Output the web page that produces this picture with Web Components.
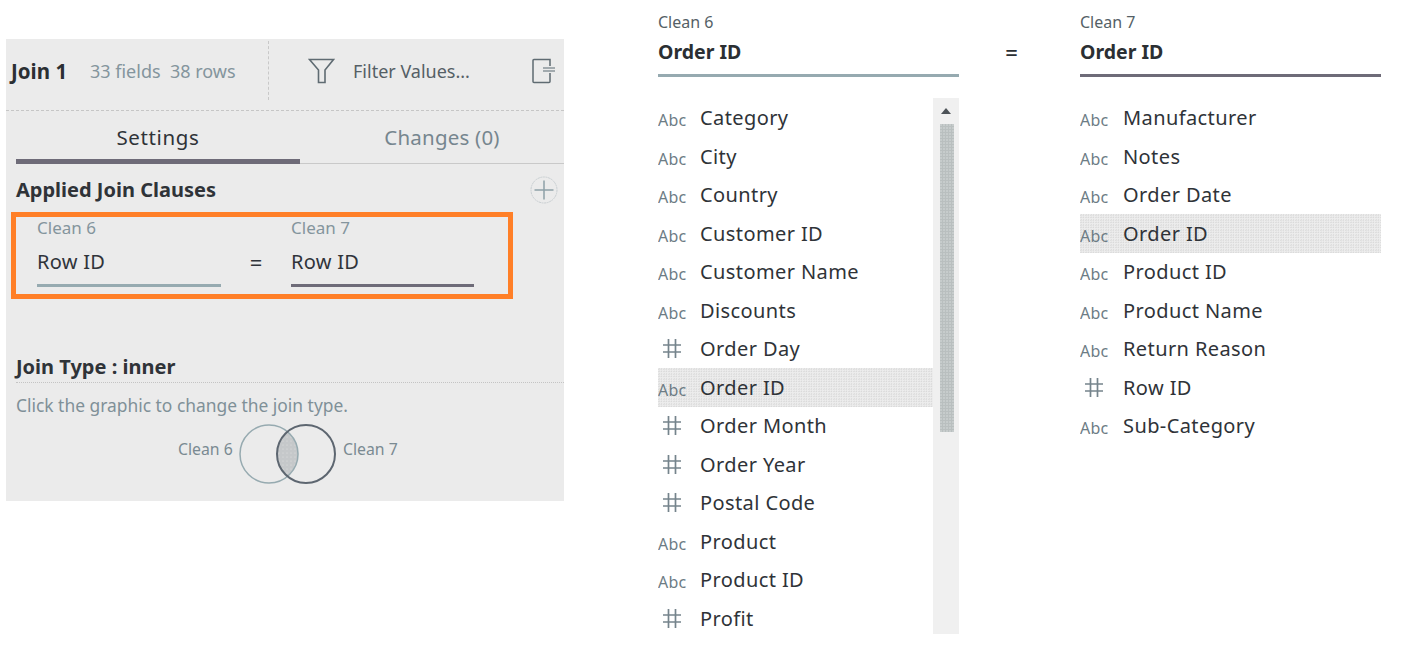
<!DOCTYPE html>
<html><head><meta charset="utf-8"><title>Join</title>
<style>
html,body{margin:0;padding:0;background:#fff;}
body{width:1402px;height:649px;overflow:hidden;font-family:"Noto Sans","Liberation Sans",sans-serif;color:#2b2f33;}
</style></head><body>
<x-page>
  <x-join-panel slot="left">
    <x-clause slot="clause"></x-clause>
    <x-venn slot="venn"></x-venn>
  </x-join-panel>
  <x-field-col slot="center" name="Clean 6" field="Order ID" accent="#96aab0" scroll selected="Order ID"
   items="a:Category,a:City,a:Country,a:Customer ID,a:Customer Name,a:Discounts,n:Order Day,a:Order ID,n:Order Month,n:Order Year,n:Postal Code,a:Product,a:Product ID,n:Profit"></x-field-col>
  <x-field-col slot="right" name="Clean 7" field="Order ID" accent="#6e6b78" selected="Order ID" gap="43"
   items="a:Manufacturer,a:Notes,a:Order Date,a:Order ID,a:Product ID,a:Product Name,a:Return Reason,n:Row ID,a:Sub-Category"></x-field-col>
</x-page>
<script>
const def=(n,html,extra)=>{customElements.define(n,class extends HTMLElement{
  constructor(){super();this.attachShadow({mode:'open'}).innerHTML=html;}
  connectedCallback(){extra&&extra.call(this)}
})};
const dots='background-color:#ededed;background-image:radial-gradient(circle at 1px 1px,#d8d8d8 .7px,transparent .8px);background-size:2.5px 2.5px;';

def('x-page',`<style>
:host{display:flex;align-items:flex-start;width:1402px;height:649px;box-sizing:border-box;padding-left:6px}
.l{margin-top:39px;margin-right:94px;display:block}
.eq{margin:39px 62px 0 46px;font-size:22px;line-height:26px;width:13px;text-align:center;color:#2b2f33;font-weight:500}
.c{margin-top:12px;display:block}
</style><div class="l"><slot name="left"></slot></div><div class="c"><slot name="center"></slot></div><div class="eq">=</div><div class="c"><slot name="right"></slot></div>`);

def('x-join-panel',`<style>
:host{display:block;width:558px;height:462px;background:#ebebeb;font-size:17px;color:#7f9098}
.top{display:flex;align-items:center;height:63px;padding-bottom:8px;border-bottom:1px dashed #c6c6c6}
.title{margin-left:5px;font-weight:700;font-size:20.5px;color:#2b2f33;width:79px;white-space:nowrap}
.meta{width:178px;white-space:pre;font-size:18px;color:#84959d}
.div{width:0;height:59px;border-left:1px dashed #c8c8c8;align-self:flex-start;margin-top:2px}
.f{margin-left:39px;display:block}
.fv{margin-left:18px;width:179px;color:#555f66;font-size:18px;white-space:nowrap}
.tabs{display:flex;height:53px;margin-left:10px;border-bottom:1px solid #c9c9c9;font-size:20.5px;box-sizing:border-box}
.tab{height:52px;line-height:52px;text-align:center;box-sizing:border-box}
.t1{width:284px;border-bottom:5px solid #6e6b78;color:#2f3338;height:53px;letter-spacing:.65px}
.t2{width:244px;margin-left:20px;color:#76868f;letter-spacing:.2px}
.h{display:flex;align-items:center;justify-content:space-between;margin:13px 6px 0 10px;height:26px;font-weight:700;font-size:20px;color:#2f3338}
.h span{margin-top:-2px}
.sec{margin:55px 0 0 10px;font-weight:700;font-size:20px;color:#2f3338;line-height:25px;height:25px;padding-bottom:3px;border-bottom:1px dotted #c4c4c4}
.hint{margin:11px 0 8px 10px;font-size:17.4px;line-height:22px;color:#7f9098;white-space:nowrap}
</style>
<div class="top"><span class="title">Join 1</span><span class="meta">33 fields  38 rows</span><span class="div"></span>
<svg class="f" width="27" height="26" viewBox="0 0 27 26" fill="none" stroke="#5f6b72" stroke-width="1.6"><path d="M1.5 1.5H25.5L17 12V24.5H10.5V12Z"/></svg>
<span class="fv">Filter Values...</span>
<svg width="24" height="26" viewBox="0 0 24 26" fill="none" stroke="#5f6b72" stroke-width="1.5"><path d="M18 8V1.5H2A1 1 0 0 0 1 2.5V23.5A1 1 0 0 0 2 24.5H17A1 1 0 0 0 18 23.5V15"/><path d="M11 10H23M11 13H23" stroke="#8a959b" stroke-width="1.3"/></svg>
</div>
<div class="tabs"><div class="tab t1">Settings</div><div class="tab t2">Changes (0)</div></div>
<div class="h"><span>Applied Join Clauses</span><svg width="28" height="28" viewBox="0 0 28 28" fill="none"><circle cx="14" cy="14" r="13" stroke="#c9cfd2" stroke-dasharray="2 .6"/><path d="M14 4.5V23.5M4.5 14H23.5" stroke="#8fa1a8" stroke-width="1.5"/></svg></div>
<slot name="clause"></slot>
<div class="sec">Join Type : inner</div>
<div class="hint">Click the graphic to change the join type.</div>
<slot name="venn"></slot>
`);

def('x-clause',`<style>
:host{display:flex;box-sizing:border-box;width:502px;height:87px;margin:9px 0 0 5px;border:5px solid #ff7f27;padding:0 0 0 21px;font-size:20px;color:#30343a}
.col{width:184px;display:block}
.n{font-size:17px;line-height:22px;color:#84959d}
.v{line-height:26px;margin-top:10px;letter-spacing:.3px;height:35px}
.u{height:3px}
.eq{width:70px;text-align:center;font-size:22px;line-height:26px;margin-top:32px;height:26px}
</style>
<div class="col"><div class="n">Clean 6</div><div class="v">Row ID</div><div class="u" style="background:#96aab0"></div></div>
<div class="eq">=</div>
<div class="col" style="width:183px"><div class="n">Clean 7</div><div class="v">Row ID</div><div class="u" style="background:#6e6b78"></div></div>`);

def('x-venn',`<style>
:host{display:flex;align-items:center;gap:6px;margin:0 0 0 172px;height:60px;font-size:15.8px;color:#7a8a92}
span{display:block;width:54px;white-space:nowrap;margin-top:-10px}
svg{display:block;flex:none}
</style><span>Clean 6</span>
<svg width="99" height="60" viewBox="0 0 99 60" fill="none">
<defs><pattern id="p" width="4" height="4" patternUnits="userSpaceOnUse"><rect width="4" height="4" fill="#c5c8ca"/><circle cx="1" cy="1" r=".5" fill="#e6e7e8"/></pattern>
<clipPath id="c"><circle cx="31" cy="30" r="29"/></clipPath></defs>
<circle cx="68" cy="30" r="29" fill="url(#p)" clip-path="url(#c)"/>
<circle cx="31" cy="30" r="29" stroke="#96aab0" stroke-width="1.5"/>
<circle cx="68" cy="30" r="29" stroke="#5d6670" stroke-width="2"/></svg>
<span>Clean 7</span>`);

def('x-field-col',`<style>
:host{display:block;width:301px}
.n{font-size:16px;line-height:20px;color:#555f66}
.f{font-weight:700;font-size:19.5px;line-height:26px;margin-top:7px;color:#2b2f33;padding-bottom:9px;border-bottom:3px solid var(--a)}
.body{display:flex;margin-top:21px;height:536px;overflow:hidden}
.list{flex:1 1 auto;min-width:0;padding-top:.5px}
.row{display:flex;align-items:center;height:38.5px;font-size:20px;letter-spacing:.4px;color:#2f3338;white-space:nowrap}
.row.sel{${dots}}
.ic{width:var(--g,42px);flex:none;display:flex;color:#6d7c85;font-size:16px;padding-top:5px;box-sizing:border-box;letter-spacing:.2px}
.ic svg{margin:-5px 0 0 5px;display:block}
.bar{flex:none;width:26px;background:#f0f0f0;display:none;flex-direction:column;align-items:center}
.bar .up{height:26px;display:flex;align-items:center;justify-content:center}
.bar .th{width:14px;margin-left:1px;height:308px;background-color:#b9bfbf;background-image:radial-gradient(circle at 1px 1px,#d6d9d9 .6px,transparent .8px);background-size:3px 3px}
:host([scroll]) .bar{display:flex}
</style>
<div class="n"></div><div class="f"></div>
<div class="body"><div class="list"></div><div class="bar"><div class="up"><svg width="10" height="6" viewBox="0 0 10 6"><path d="M5 0L10 6H0Z" fill="#4d5358"/></svg></div><div class="th"></div></div></div>`,
function(){
  const s=this.shadowRoot;
  this.style.setProperty('--a',this.getAttribute('accent'));
  if(this.getAttribute('gap'))this.style.setProperty('--g',this.getAttribute('gap')+'px');
  s.querySelector('.n').textContent=this.getAttribute('name');
  s.querySelector('.f').textContent=this.getAttribute('field');
  const hash='<svg width="18" height="19" viewBox="0 0 18 19" fill="none" stroke="#75848c" stroke-width="1.7"><path d="M5.5 0V19M12.5 0V19M0 6H18M0 13H18"/></svg>';
  const sel=this.getAttribute('selected');
  const list=s.querySelector('.list');
  this.getAttribute('items').split(',').forEach(it=>{
    const [t,name]=it.split(':');
    const r=document.createElement('div');
    r.className='row'+(name===sel?' sel':'');
    const ic=document.createElement('span');ic.className='ic';
    if(t==='a')ic.textContent='Abc';else ic.innerHTML=hash;
    const tx=document.createElement('span');tx.textContent=name;
    r.append(ic,tx);list.append(r);
  });
});
</script>
</body></html>
